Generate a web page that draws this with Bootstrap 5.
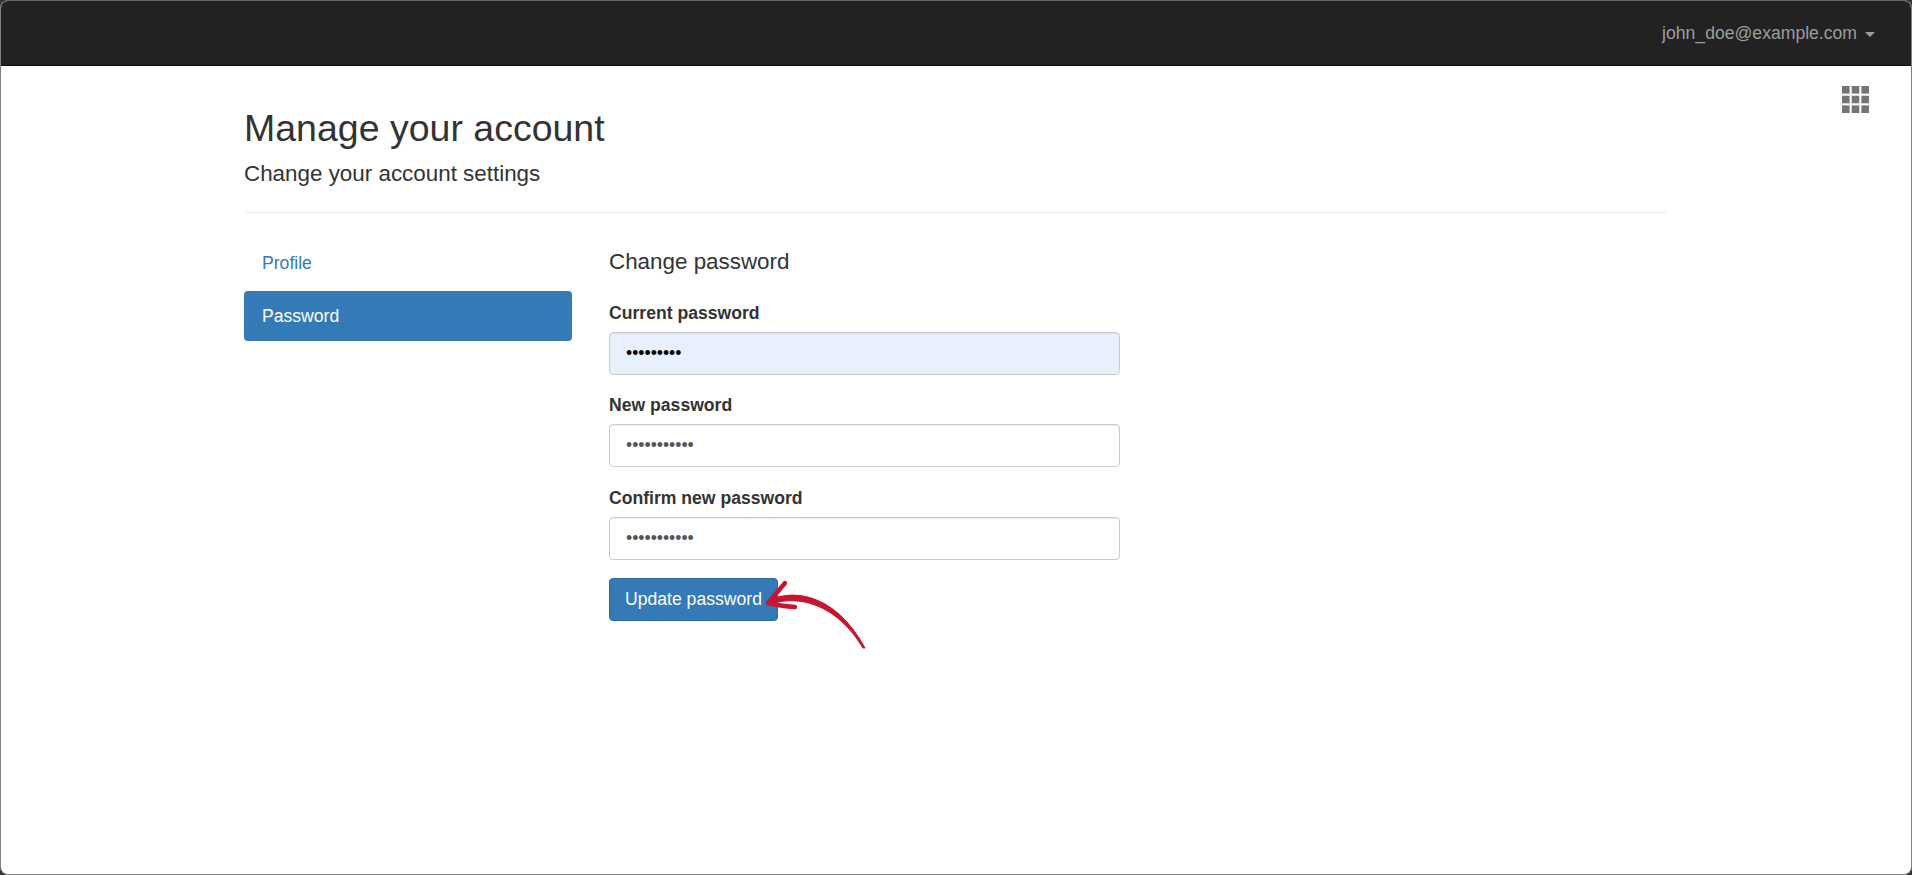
<!DOCTYPE html>
<html lang="en">
<head>
  <meta charset="UTF-8" />
  <title>Manage your account</title>
  <meta name="viewport" content="width=device-width, initial-scale=1">
  <link href="https://cdn.jsdelivr.net/npm/bootstrap@5.3.3/dist/css/bootstrap.min.css" rel="stylesheet">
  <style>
    html, body { height: 100%; }
    body {
      background: #333;
      font-family: "Liberation Sans", Arial, sans-serif;
      font-size: 17.6px;
      color: #333;
      overflow: hidden;
    }
    .app-frame {
      height: 875px;
      background: #fff;
      border: 1px solid #808080;
      border-top-color: #666;
      border-radius: 8px;
      overflow: hidden;
      position: relative;
    }
    .top-bar {
      height: 65px;
      background: #222;
      border-bottom: 1px solid #080808;
      padding: 0 36px 0 0;
    }
    .user-toggle, .user-toggle:hover, .user-toggle:focus { color: #9d9d9d; font-size: 17.6px; padding: 0; border: 0; }
    .user-toggle.dropdown-toggle::after {
      margin-left: 8px;
      border-top-width: 5px;
      border-right-width: 5px;
      border-left-width: 5px;
      vertical-align: 2px;
    }
    .apps-icon { position: absolute; top: 85px; right: 42px; display: block; }
    .page-body { width: 1424px; margin: 0 auto; padding-top: 42px; }
    .page-title { font-size: 37.5px; font-weight: 500; line-height: 1.1; margin: 0 0 13px; color: #333; }
    .page-sub { font-size: 22.4px; line-height: 1.1; margin: 0; color: #333; }
    .page-rule { margin: 25px 0 25px; border: 0; border-top: 1px solid #eee; opacity: 1; }
    .side-col { width: 328px; flex: none; }
    .form-col { width: 511px; margin-left: 37px; }
    .side-link { display: block; height: 50px; line-height: 50px; padding: 0 18px; border-radius: 4px; color: #337ab7; text-decoration: none; font-size: 17.6px; margin-bottom: 3px; }
    .side-link.on { background: #337ab7; color: #fff; }
    .form-title { font-size: 22.4px; font-weight: 500; line-height: 1.1; margin: 12px 0 27px; color: #333; }
    .field-label { display: block; font-weight: 700; font-size: 17.6px; line-height: 22px; margin-bottom: 8px; color: #333; }
    .field-box { height: 43px; border: 1px solid #ccc; border-radius: 4px; padding: 6px 16px; font-size: 17.6px; color: #555; box-shadow: inset 0 1px 1px rgba(0,0,0,.075); font-family: "Liberation Sans", Arial, sans-serif; }
    .field-box.filled, .field-box.filled:focus { background: #e8f0fe; color: #000; }
    .field-row { margin-bottom: 19.5px; }
    .field-row.last { margin-bottom: 18px; }
    .btn-wrap { position: relative; display: inline-block; }
    .save-btn { height: 43px; padding: 0 15px; background: #337ab7; border: 1px solid #2e6da4; border-radius: 4px; color: #fff; font-size: 17.6px; }
    .save-btn:hover { background: #286090; color: #fff; }
    .red-arrow { position: absolute; left: 151px; top: -2px; }
  </style>
</head>
<body>
  <div class="app-frame">
    <nav class="top-bar d-flex align-items-center justify-content-end">
      <div class="dropdown">
        <a class="user-toggle dropdown-toggle btn" href="#" data-bs-toggle="dropdown">john_doe@example.com</a>
        <ul class="dropdown-menu dropdown-menu-end">
          <li><a class="dropdown-item" href="#">Manage account</a></li>
          <li><a class="dropdown-item" href="#">Log out</a></li>
        </ul>
      </div>
    </nav>

    <svg class="apps-icon" width="27" height="27" viewBox="0 0 27 27" fill="#757575">
      <rect x="0" y="0" width="7.6" height="7.6"/><rect x="9.7" y="0" width="7.6" height="7.6"/><rect x="19.4" y="0" width="7.6" height="7.6"/>
      <rect x="0" y="9.7" width="7.6" height="7.6"/><rect x="9.7" y="9.7" width="7.6" height="7.6"/><rect x="19.4" y="9.7" width="7.6" height="7.6"/>
      <rect x="0" y="19.4" width="7.6" height="7.6"/><rect x="9.7" y="19.4" width="7.6" height="7.6"/><rect x="19.4" y="19.4" width="7.6" height="7.6"/>
    </svg>

    <main class="page-body">
      <h1 class="page-title">Manage your account</h1>
      <p class="page-sub">Change your account settings</p>
      <hr class="page-rule">

      <div class="d-flex">
        <div class="side-col">
          <a class="side-link" href="#">Profile</a>
          <a class="side-link on" href="#">Password</a>
        </div>
        <form class="form-col">
          <h4 class="form-title">Change password</h4>
          <div class="field-row">
            <label class="field-label" for="cur">Current password</label>
            <input id="cur" type="password" class="form-control field-box filled" value="aaaaaaaaa">
          </div>
          <div class="field-row">
            <label class="field-label" for="new1">New password</label>
            <input id="new1" type="password" class="form-control field-box" value="aaaaaaaaaaa">
          </div>
          <div class="field-row last">
            <label class="field-label" for="new2">Confirm new password</label>
            <input id="new2" type="password" class="form-control field-box" value="aaaaaaaaaaa">
          </div>
          <div class="btn-wrap">
            <button type="button" class="btn save-btn">Update password</button>
            <svg class="red-arrow" width="110" height="80" viewBox="0 0 110 80" fill="none" stroke="#c8142f" stroke-linecap="round" stroke-linejoin="round">
              <path d="M8 25 C30 13 74 15 105 72 L103 72 C72 21 30 20 8 29 Z" fill="#c8142f" stroke-width="1"/>
              <path d="M25 7 Q16 18 8 27 Q20 30 35 31" stroke-width="4.4"/>
            </svg>
          </div>
        </form>
      </div>
    </main>
  </div>
  <script src="https://cdn.jsdelivr.net/npm/bootstrap@5.3.3/dist/js/bootstrap.bundle.min.js"></script>
</body>
</html>
